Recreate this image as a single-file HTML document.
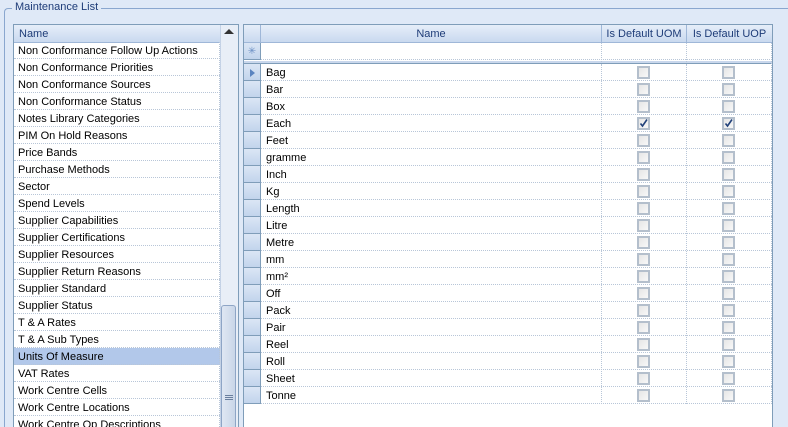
<!DOCTYPE html>
<html style="width:788px;height:427px;overflow:hidden"><head><style>
*{margin:0;padding:0;box-sizing:border-box}
body{width:788px;height:427px;overflow:hidden;background:#dfe9f7;font-family:"Liberation Sans",Arial,sans-serif;font-size:11px;color:#000}
#w{position:relative;width:788px;height:427px;overflow:hidden}
.abs{position:absolute}
.gb{left:4px;top:8px;width:784px;height:419px;border:1px solid #8aa7cf;border-bottom:none;border-right:none;border-radius:4px 0 0 0}
.gbt{left:12px;top:1px;background:#dfe9f7;padding:0 3px;color:#1e3c78;font-size:11px}
.list{left:13px;top:24px;width:226px;height:403px;border:1px solid #7f9db9;border-bottom:none;background:#fff}
.hdr{background:linear-gradient(#e6eef9,#c9d9ef);border-bottom:1px solid #9fb7d8;color:#1e3c78;height:18px;line-height:18px}
.row{position:absolute;left:0;height:17px;line-height:18px;border-bottom:1px dotted #b8c6d8;padding-left:4px;white-space:nowrap}
.sel{background:#b2c8ea}
.sb{left:220px;top:25px;width:18px;height:402px;background:#e8eef7;border-left:1px solid #c4d2e6}
.thumb{left:221px;top:305px;width:15px;height:122px;background:linear-gradient(90deg,#dfe7f3,#c9d6e8);border:1px solid #8ea5c6;border-bottom:none;border-radius:3px 3px 0 0}
.grid{left:243px;top:24px;width:530px;height:403px;border:1px solid #7f9db9;border-bottom:none;background:#fff}
.rh{position:absolute;left:0;width:17px;height:17px;background:linear-gradient(#dbe6f5,#c2d4ec);border-right:1px solid #7f9db9;border-bottom:1px solid #7f9db9}
.cb{position:absolute;width:13px;height:13px;border:2px solid #b4bfcc;background:linear-gradient(135deg,#e6e6e6,#f8f8f8)}
.vl{position:absolute;width:0;border-left:1px dotted #b8c6d8}
</style></head><body><div id="w">
<div class="abs gb"></div>
<div class="abs gbt">Maintenance List</div>

<div class="abs list">
 <div class="hdr" style="padding-left:5px;width:206px">Name</div>
</div>
<div class="abs" style="left:14px;top:42px;width:206px;height:385px;overflow:hidden">
<div class="row" style="top:0;width:206px">Non Conformance Follow Up Actions</div>
<div class="row" style="top:17px;width:206px">Non Conformance Priorities</div>
<div class="row" style="top:34px;width:206px">Non Conformance Sources</div>
<div class="row" style="top:51px;width:206px">Non Conformance Status</div>
<div class="row" style="top:68px;width:206px">Notes Library Categories</div>
<div class="row" style="top:85px;width:206px">PIM On Hold Reasons</div>
<div class="row" style="top:102px;width:206px">Price Bands</div>
<div class="row" style="top:119px;width:206px">Purchase Methods</div>
<div class="row" style="top:136px;width:206px">Sector</div>
<div class="row" style="top:153px;width:206px">Spend Levels</div>
<div class="row" style="top:170px;width:206px">Supplier Capabilities</div>
<div class="row" style="top:187px;width:206px">Supplier Certifications</div>
<div class="row" style="top:204px;width:206px">Supplier Resources</div>
<div class="row" style="top:221px;width:206px">Supplier Return Reasons</div>
<div class="row" style="top:238px;width:206px">Supplier Standard</div>
<div class="row" style="top:255px;width:206px">Supplier Status</div>
<div class="row" style="top:272px;width:206px">T &amp; A Rates</div>
<div class="row" style="top:289px;width:206px">T &amp; A Sub Types</div>
<div class="row sel" style="top:306px;width:206px">Units Of Measure</div>
<div class="row" style="top:323px;width:206px">VAT Rates</div>
<div class="row" style="top:340px;width:206px">Work Centre Cells</div>
<div class="row" style="top:357px;width:206px">Work Centre Locations</div>
<div class="row" style="top:374px;width:206px;height:11px;overflow:hidden;border-bottom:none">Work Centre Op Descriptions</div>
</div>
<div class="abs" style="left:219px;top:42px;height:385px;border-left:1px dotted #b8c6d8"></div>
<div class="abs sb"></div>
<div class="abs" style="left:224px;top:29px;width:0;height:0;border-left:5px solid transparent;border-right:5px solid transparent;border-bottom:5px solid #333"></div>
<div class="abs thumb"></div>
<div class="abs" style="left:225px;top:395px;width:8px;height:5px;border-top:1px solid #6a7f9e;border-bottom:1px solid #6a7f9e"></div>
<div class="abs" style="left:225px;top:397px;width:8px;border-top:1px solid #6a7f9e"></div>

<div class="abs grid"></div>
<div class="abs hdr" style="left:244px;top:25px;width:528px;">
 <div class="abs" style="left:16px;top:0;width:341px;height:17px;border-left:1px solid #9fb7d8;text-align:center">Name</div>
 <div class="abs" style="left:357px;top:0;width:85px;height:17px;border-left:1px solid #9fb7d8;text-align:center">Is Default UOM</div>
 <div class="abs" style="left:442px;top:0;width:86px;height:17px;border-left:1px solid #9fb7d8;text-align:center">Is Default UOP</div>
</div>
<div class="abs" style="left:244px;top:43px;width:528px;height:362px">
 <div class="rh" style="top:0;color:#6b8fc4;text-align:center;line-height:17px;font-size:10px">✳</div>
 <div class="abs" style="left:17px;top:16px;width:511px;border-bottom:1px dotted #b8c6d8"></div>
 <div class="abs" style="left:0;top:18px;width:528px;height:3px;background:#c9d7ec;border-bottom:1px solid #7f9db9"></div>
</div>
<div class="abs" id="rows" style="left:244px;top:64px;width:528px;height:341px">
</div>
<div class="abs vl" style="left:601px;top:43px;height:19px"></div>
<div class="abs vl" style="left:686px;top:43px;height:19px"></div>
<div class="abs vl" style="left:601px;top:64px;height:340px"></div>
<div class="abs vl" style="left:686px;top:64px;height:340px"></div>
<div class="abs vl" style="left:771px;top:43px;height:361px"></div>
<script>
var n=["Bag","Bar","Box","Each","Feet","gramme","Inch","Kg","Length","Litre","Metre","mm","mm²","Off","Pack","Pair","Reel","Roll","Sheet","Tonne"];
var h="";
n.forEach(function(t,i){var y=i*17;
h+='<div class="rh" style="top:'+y+'px"></div>';
if(i==0)h+='<div class="abs" style="left:6px;top:'+(y+5)+'px;border-top:4px solid transparent;border-bottom:4px solid transparent;border-left:5px solid #5a84c0"></div>';
h+='<div class="row" style="left:17px;top:'+y+'px;width:511px;padding-left:5px">'+t+'</div>';
var ck=i==3?'<svg style="position:absolute;left:0;top:0" width="9" height="9" viewBox="0 0 9 9"><path d="M1.5 4.5 L3.5 7 L8 0.5" stroke="#21417a" stroke-width="1.6" fill="none"/></svg>':'';
h+='<div class="cb" style="left:393px;top:'+(y+2)+'px">'+ck+'</div>';
h+='<div class="cb" style="left:478px;top:'+(y+2)+'px">'+ck+'</div>';
});
document.getElementById("rows").innerHTML=h;
</script>
</div></body></html>
